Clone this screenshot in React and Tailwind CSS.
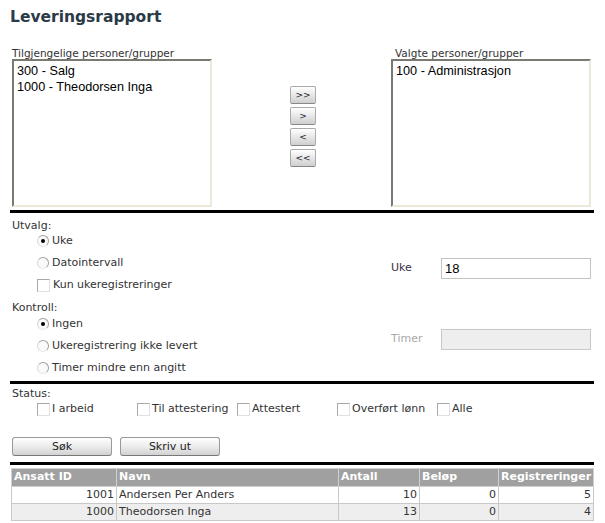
import React from "react";

const font = { fontFamily: '"DejaVu Sans", Verdana, sans-serif' };
const arial = { fontFamily: '"Liberation Sans", Arial, sans-serif' };

const Radio = ({ checked }) => (
  <span className="inline-flex items-center justify-center w-[12px] h-[12px] rounded-full border border-[#a0a0a0] border-l-[#d8d8d8] border-b-[#e8e8e8] bg-[#fafafa] shrink-0">
    {checked && <span className="w-[4px] h-[4px] rounded-full bg-black" />}
  </span>
);

const Check = () => (
  <span className="inline-block w-[13px] h-[13px] border border-[#a8a8a8] border-r-[#e0e0e0] border-b-[#e0e0e0] bg-white shrink-0" />
);

const MoveBtn = ({ children }) => (
  <button className="w-[26px] h-[18px] flex items-center justify-center rounded-[2px] border border-[#aaa] border-b-[#888] bg-gradient-to-b from-white to-[#cfcfcf] text-[9px] text-[#223] leading-none">
    {children}
  </button>
);

const BigBtn = ({ children }) => (
  <button className="w-[100px] h-[19px] flex items-center justify-center rounded-[3px] border border-[#999] border-b-[#777] bg-gradient-to-b from-white via-[#ececec] to-[#d2d2d2] text-[11px] text-[#222] leading-none">
    {children}
  </button>
);

const Listbox = ({ items }) => (
  <div className="w-[200px] h-[148px] bg-white border-2 border-t-[#7a7a72] border-l-[#7a7a72] border-r-[#ece9d8] border-b-[#ece9d8] pl-[3px] pt-[2px]">
    {items.map((t) => (
      <div key={t} className="text-[12.7px] leading-[16px] text-black" style={arial}>
        {t}
      </div>
    ))}
  </div>
);

const Line = () => <div className="h-[3px] bg-black mx-[10px] w-[584px]" />;

const Opt = ({ children }) => <div className="flex items-center gap-[3px] h-[22px]">{children}</div>;

const rows = [
  ["1001", "Andersen Per Anders", "10", "0", "5"],
  ["1000", "Theodorsen Inga", "13", "0", "4"],
];

export default function App() {
  return (
    <div className="w-[605px] h-[523px] bg-white text-[11px] text-[#333] overflow-hidden" style={font}>
      <h1 className="pl-[10px] pt-[7px] text-[15.5px] font-bold text-[#2b3a47] leading-[20px]">Leveringsrapport</h1>

      <div className="flex mt-[21px] pl-[12px]">
        <div className="flex flex-col">
          <div className="leading-[11px] h-[11px] text-[10.5px]">Tilgjengelige personer/grupper</div>
          <Listbox items={["300 - Salg", "1000 - Theodorsen Inga"]} />
        </div>
        <div className="flex flex-col gap-[3px] ml-[78px] mt-[38px]">
          <MoveBtn>&gt;&gt;</MoveBtn>
          <MoveBtn>&gt;</MoveBtn>
          <MoveBtn>&lt;</MoveBtn>
          <MoveBtn>&lt;&lt;</MoveBtn>
        </div>
        <div className="flex flex-col ml-[75px]">
          <div className="leading-[11px] h-[11px] pl-[4px] text-[10.5px]">Valgte personer/grupper</div>
          <Listbox items={["100 - Administrasjon"]} />
        </div>
      </div>

      <div className="mt-[3px]"><Line /></div>

      <div className="flex">
        <div className="w-[391px] pl-[12px] pt-[6px]">
          <div className="leading-[14px]">Utvalg:</div>
          <div className="pl-[25px] -mt-[3px]">
            <Opt><Radio checked />Uke</Opt>
            <Opt><Radio />Datointervall</Opt>
            <Opt><Check />Kun ukeregistreringer</Opt>
          </div>
          <div className="leading-[14px] mt-[5px]">Kontroll:</div>
          <div className="pl-[25px] -mt-[2px]">
            <Opt><Radio checked />Ingen</Opt>
            <Opt><Radio />Ukeregistrering ikke levert</Opt>
            <Opt><Radio />Timer mindre enn angitt</Opt>
          </div>
        </div>
        <div className="flex flex-col pt-[45px]">
          <div className="flex items-center">
            <span className="w-[50px] text-[#3a2f45]">Uke</span>
            <div className="w-[150px] h-[21px] border border-[#c4c4c4] bg-white pl-[3px] flex items-center text-[13px] text-black" style={arial}>18</div>
          </div>
          <div className="flex items-center mt-[50px]">
            <span className="w-[50px] text-[#aaa]">Timer</span>
            <div className="w-[150px] h-[21px] border border-[#c8c8c8] bg-[#eeeeee]" />
          </div>
        </div>
      </div>

      <div className="mt-[2px]"><Line /></div>

      <div className="pl-[12px] pt-[3px]">
        <div className="leading-[14px]">Status:</div>
        <div className="flex pl-[25px]">
          {["I arbeid", "Til attestering", "Attestert", "Overført lønn", "Alle"].map((t) => (
            <div key={t} className="w-[100px] flex items-center gap-[2px] h-[16px]">
              <Check />
              {t}
            </div>
          ))}
        </div>
      </div>

      <div className="flex gap-[8px] pl-[12px] mt-[20px]">
        <BigBtn>Søk</BigBtn>
        <BigBtn>Skriv ut</BigBtn>
      </div>

      <div className="mt-[6px]"><Line /></div>

      <table className="ml-[11px] mt-[3px] w-[583px] border-collapse text-[11px]">
        <thead>
          <tr className="bg-[#a0a0a0] text-white font-bold h-[16px]">
            <th className="w-[105px] text-left pl-[2px] border border-[#d0d0d0] leading-[14px]">Ansatt ID</th>
            <th className="w-[222px] text-left pl-[2px] border border-[#d0d0d0]">Navn</th>
            <th className="w-[81px] text-left pl-[2px] border border-[#d0d0d0]">Antall</th>
            <th className="w-[79px] text-left pl-[2px] border border-[#d0d0d0]">Beløp</th>
            <th className="text-left pl-[2px] border border-[#d0d0d0]">Registreringer</th>
          </tr>
        </thead>
        <tbody>
          {rows.map((r, i) => (
            <tr key={r[0]} className={i % 2 ? "bg-[#eeeeee] h-[17px] leading-[15px]" : "bg-white h-[17px] leading-[15px]"}>
              <td className="text-right pr-[2px] border border-[#c8c8c8]">{r[0]}</td>
              <td className="text-left pl-[2px] border border-[#c8c8c8]">{r[1]}</td>
              <td className="text-right pr-[2px] border border-[#c8c8c8]">{r[2]}</td>
              <td className="text-right pr-[2px] border border-[#c8c8c8]">{r[3]}</td>
              <td className="text-right pr-[2px] border border-[#c8c8c8]">{r[4]}</td>
            </tr>
          ))}
        </tbody>
      </table>
    </div>
  );
}
